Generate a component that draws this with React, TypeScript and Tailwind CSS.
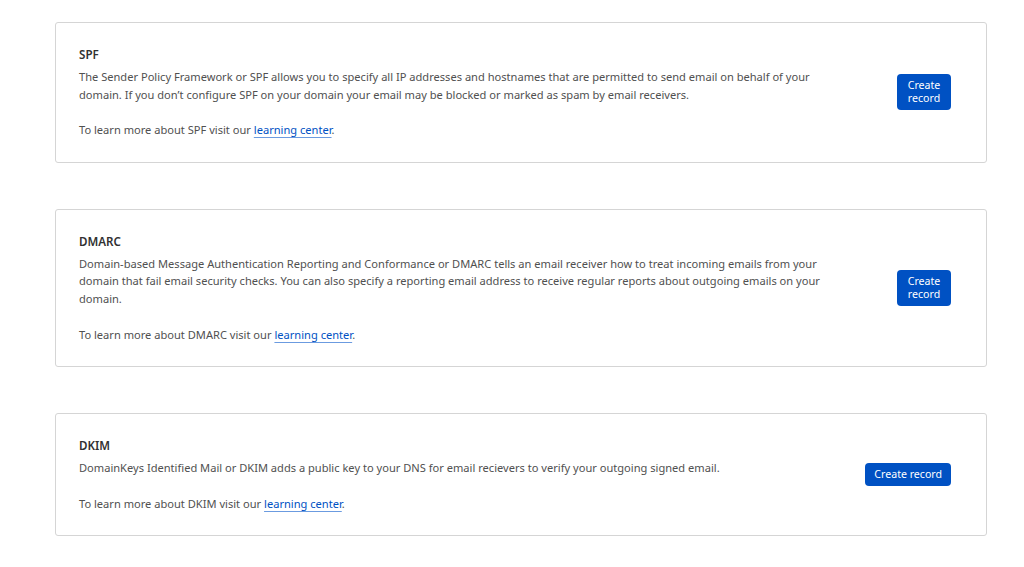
type Rec = {
  name: string;
  body: string;
  wrap: boolean;
};

const records: Rec[] = [
  {
    name: 'SPF',
    body:
      "The Sender Policy Framework or SPF allows you to specify all IP addresses and hostnames that are permitted to send email on behalf of your domain. If you don\u2019t configure SPF on your domain your email may be blocked or marked as spam by email receivers.",
    wrap: true,
  },
  {
    name: 'DMARC',
    body:
      'Domain-based Message Authentication Reporting and Conformance or DMARC tells an email receiver how to treat incoming emails from your domain that fail email security checks. You can also specify a reporting email address to receive regular reports about outgoing emails on your domain.',
    wrap: true,
  },
  {
    name: 'DKIM',
    body:
      'DomainKeys Identified Mail or DKIM adds a public key to your DNS for email recievers to verify your outgoing signed email.',
    wrap: false,
  },
];

function RecordCard({ rec }: { rec: Rec }) {
  return (
    <div className="flex items-center justify-between rounded-[3px] border border-[#d5d5d5] bg-white pt-[23px] pb-[23px] pl-[23px] pr-[35px]">
      <div className="max-w-[755px] text-[11.1px] leading-[17.6px] text-[#505050]">
        <h3 className="mb-1 text-[11.6px] leading-[18px] font-semibold text-[#313131]">{rec.name}</h3>
        <p>{rec.body}</p>
        <p className="mt-[18px]">
          To learn more about {rec.name} visit our{' '}
          <a
            href="#"
            className="text-[#0051c3] underline decoration-[#6b9be0] underline-offset-[3px]"
          >
            learning center
          </a>
          .
        </p>
      </div>
      <button
        className={`shrink-0 rounded-[4px] bg-[#0051c3] text-[10.6px] leading-[13px] text-white ${
          rec.wrap ? 'w-[54px] py-[5px]' : 'px-[9px] py-[5px]'
        }`}
      >
        Create record
      </button>
    </div>
  );
}

export default function App() {
  return (
    <div
      className="min-h-[567px] bg-white pt-[22px] pl-[55px]"
      style={{ fontFamily: '"Noto Sans", "Open Sans", sans-serif' }}
    >
      <div className="flex w-[932px] flex-col gap-[46px]">
        {records.map((r) => (
          <RecordCard key={r.name} rec={r} />
        ))}
      </div>
    </div>
  );
}
